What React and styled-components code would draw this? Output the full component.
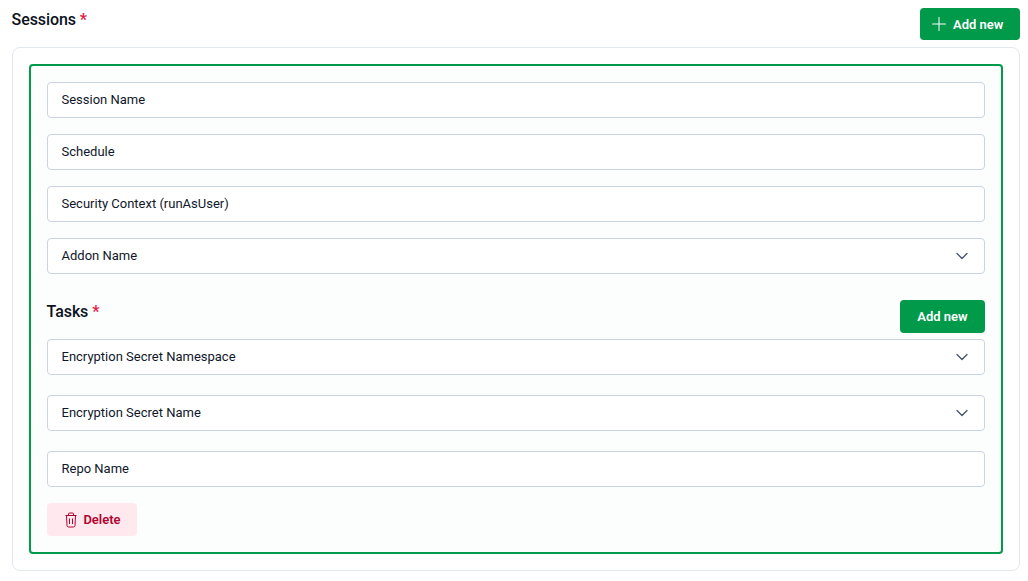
import React from "react";
import styled, { createGlobalStyle } from "styled-components";
import { ChevronDown, Plus } from "lucide-react";

const GlobalStyle = createGlobalStyle`
  html, body {
    margin: 0;
    padding: 0;
    background: #fff;
    font-family: Roboto, "Liberation Sans", sans-serif;
    color: #0f172a;
  }
  * {
    box-sizing: border-box;
  }
`;

const TrashIcon = () => (
  <svg width="12" height="16" viewBox="0 0 12 16" fill="none" stroke="currentColor" strokeWidth="1">
    <path d="M.5 3.5h11" />
    <path d="M3.5 3.5V2a1 1 0 0 1 1-1h3a1 1 0 0 1 1 1v1.5" />
    <path d="M1.5 3.5l.5 10a1.5 1.5 0 0 0 1.5 1.5h5a1.5 1.5 0 0 0 1.5-1.5l.5-10" />
    <path d="M4.5 6.5V12M7.5 6.5V12" />
  </svg>
);

const Field = ({ label, select, gap }) => (
  <StField $gap={gap}>
    <span>{label}</span>
    {select && <StChevron size={20} strokeWidth={1.6} />}
  </StField>
);

const App = () => {
  return (
    <StPage>
      <GlobalStyle />
      <StHeader>
        <StTitle>
          Sessions <StRequired>*</StRequired>
        </StTitle>
        <StMainButton>
          <Plus size={22} strokeWidth={1.1} />
          Add new
        </StMainButton>
      </StHeader>
      <StCard>
        <StSession>
          <Field label="Session Name" gap={16} />
          <Field label="Schedule" gap={16} />
          <Field label="Security Context (runAsUser)" gap={16} />
          <Field label="Addon Name" select gap={26} />
          <StTasksHeader>
            <StTitle>
              Tasks <StRequired>*</StRequired>
            </StTitle>
            <StSmallButton>Add new</StSmallButton>
          </StTasksHeader>
          <Field label="Encryption Secret Namespace" select gap={20} />
          <Field label="Encryption Secret Name" select gap={20} />
          <Field label="Repo Name" gap={16} />
          <StDeleteButton>
            <TrashIcon />
            Delete
          </StDeleteButton>
        </StSession>
      </StCard>
    </StPage>
  );
};

export default App;

const StPage = styled.div`
  width: 1028px;
  height: 581px;
  padding: 8px 8px 10px 12px;
  overflow: hidden;
`;

const StHeader = styled.div`
  display: flex;
  justify-content: space-between;
  align-items: flex-start;
  height: 39px;
`;

const StTitle = styled.h2`
  margin: 0 0 0 -0.4px;
  padding-top: 1px;
  font-size: 16px;
  line-height: 22px;
  font-weight: 500;
  letter-spacing: -0.1px;
  color: #0b1220;
`;

const StRequired = styled.span`
  font-weight: 700;
  color: #e11d48;
`;

const StMainButton = styled.button`
  display: flex;
  align-items: center;
  gap: 3.5px;
  width: 100px;
  height: 32px;
  padding: 0 0 0 7.5px;
  border: none;
  border-radius: 4px;
  background: #009a4a;
  color: #fff;
  font-family: inherit;
  font-size: 13px;
  font-weight: 600;
`;

const StCard = styled.div`
  height: 524px;
  padding: 16px;
  border: 1px solid #e2e8f0;
  border-radius: 8px;
  background: #fff;
`;

const StSession = styled.div`
  display: flex;
  flex-direction: column;
  height: 490px;
  padding: 16px;
  border: 2px solid #009a4a;
  border-radius: 4px;
  background: #fcfdfd;
`;

const StField = styled.div`
  display: flex;
  flex: none;
  align-items: center;
  justify-content: space-between;
  height: 36px;
  margin-bottom: ${({ $gap }) => $gap}px;
  padding: 0 14px 2px 13.5px;
  border: 1px solid #cbd5e1;
  border-radius: 4px;
  background: #fff;
  font-size: 13px;
  color: #0f172a;
`;

const StChevron = styled(ChevronDown)`
  flex: none;
  margin: 2px -2px 0 0;
  color: #475569;
`;

const StTasksHeader = styled.div`
  display: flex;
  flex: none;
  justify-content: space-between;
  align-items: flex-start;
  height: 39px;
`;

const StSmallButton = styled.button`
  width: 85px;
  height: 33px;
  border: none;
  border-radius: 4px;
  background: #009a4a;
  color: #fff;
  font-family: inherit;
  font-size: 13px;
  font-weight: 600;
`;

const StDeleteButton = styled.button`
  display: flex;
  align-items: center;
  justify-content: center;
  gap: 6px;
  width: 90px;
  height: 33px;
  padding: 0 0 0 2px;
  border: none;
  border-radius: 4px;
  background: #ffe9ee;
  color: #b0032f;
  font-family: inherit;
  font-size: 13px;
  font-weight: 600;
`;
